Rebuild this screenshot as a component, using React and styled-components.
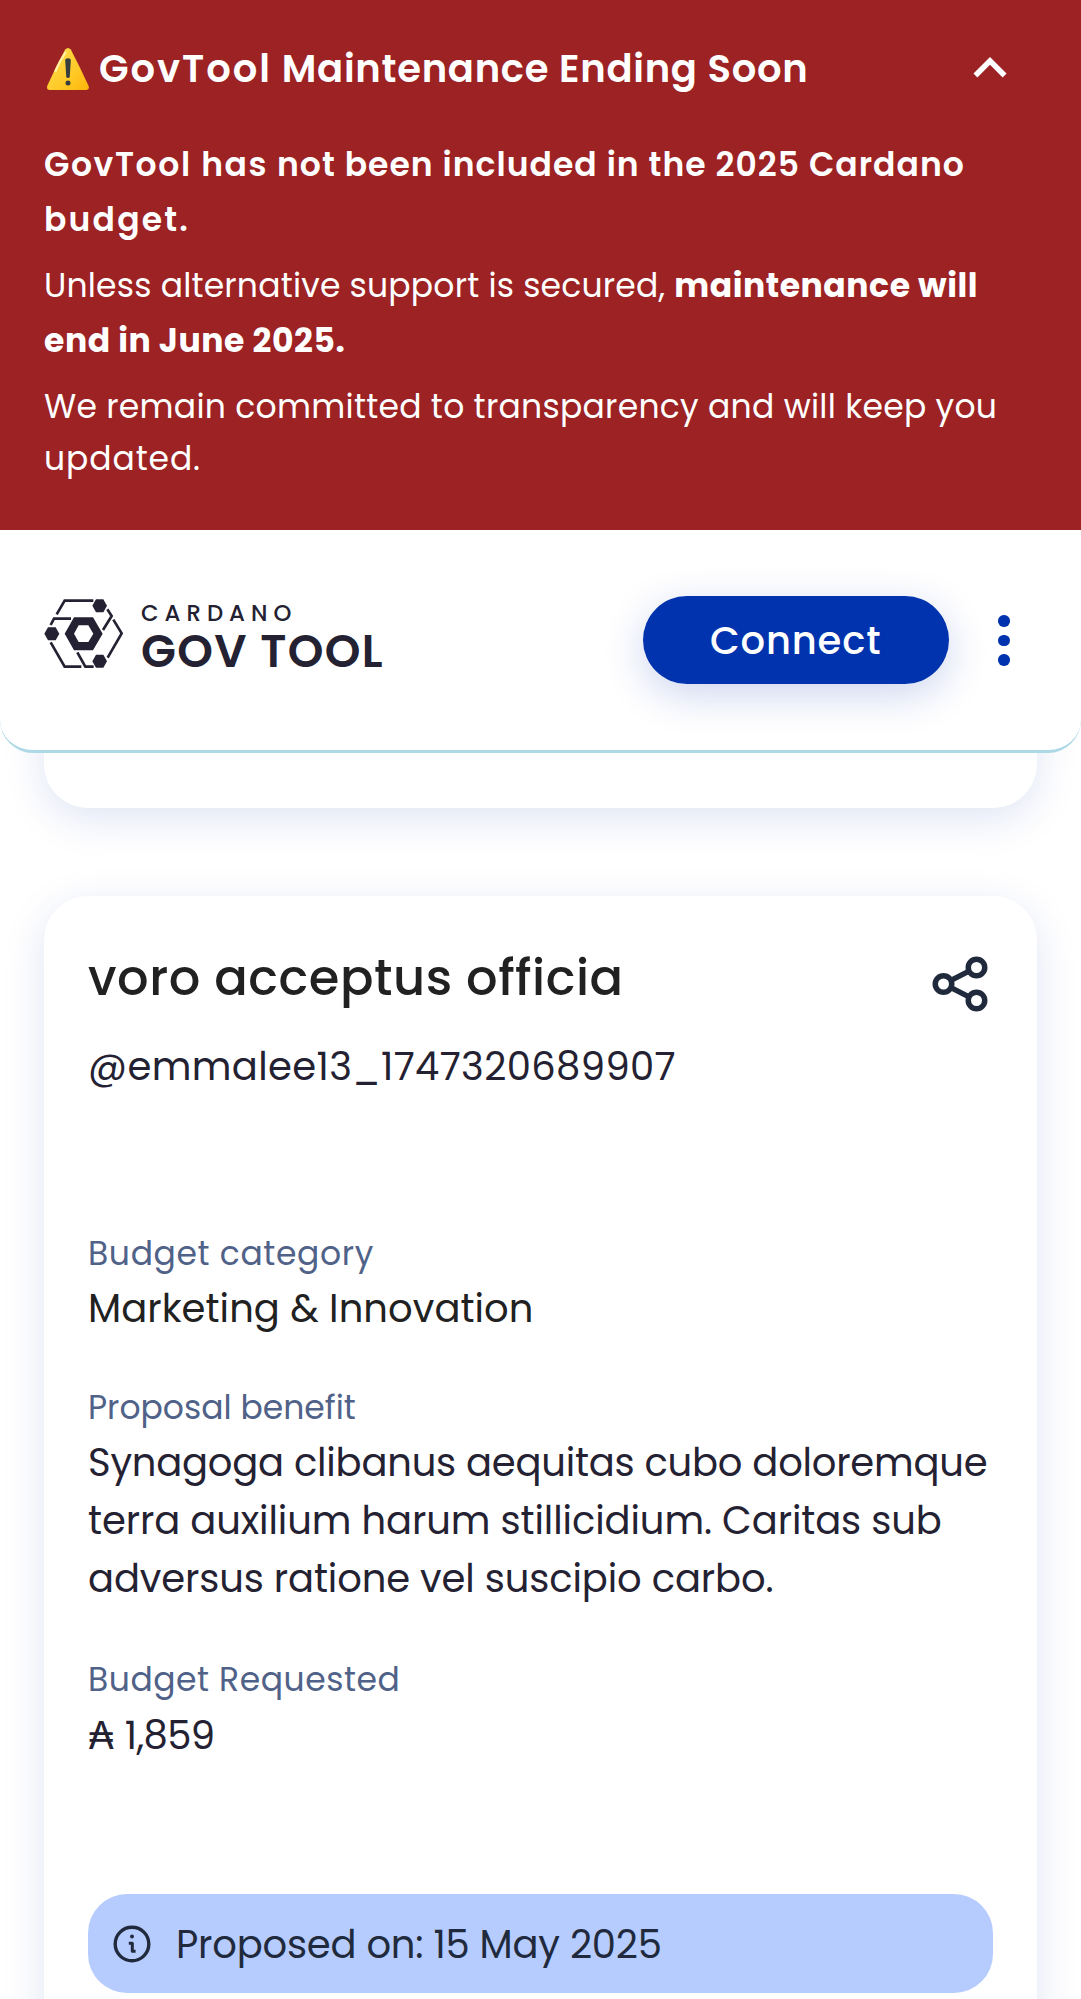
import React from "react";
import styled, { createGlobalStyle } from "styled-components";

const GlobalStyle = createGlobalStyle`
  *, *::before, *::after { box-sizing: border-box; }
  body {
    margin: 0;
    background: #fff;
    font-family: Poppins, Inter, "Open Sans", sans-serif;
  }
  p, h1, h2 { margin: 0; font-weight: 400; }
`;

const Page = styled.div`
  width: 100%;
  height: 1999px;
  overflow: hidden;
  display: flex;
  flex-direction: column;
`;

const Banner = styled.section`
  flex: none;
  height: 530px;
  padding: 35px 44px 0;
  background: #9c2224;
  color: #fff;
`;

const BannerHead = styled.div`
  display: flex;
  align-items: center;
  height: 66px;
  padding-right: 14px;
  margin-bottom: 36px;
`;

const BannerTitle = styled.h1`
  flex: 1;
  margin-left: 10px;
  padding-top: 2px;
  font-size: 38.5px;
  line-height: 66px;
  font-weight: 600;
  white-space: nowrap;
`;

const BannerText = styled.p`
  margin-bottom: ${(p) => p.$gap || 0}px;
  font-size: 33px;
  line-height: ${(p) => p.$leading || 55}px;
  font-weight: ${(p) => (p.$strong ? 600 : 400)};
`;

const Line = styled.span`
  display: block;
  white-space: nowrap;
  letter-spacing: ${(p) => p.$track || 0}px;
`;

const Run = styled.span`
  letter-spacing: ${(p) => p.$track || 0}px;
  font-weight: ${(p) => p.$weight || "inherit"};
`;

const Header = styled.header`
  position: relative;
  z-index: 2;
  flex: none;
  display: flex;
  align-items: center;
  height: 223px;
  padding: 0 44px;
  background: #fff;
  border-bottom: 3px solid #add8e6;
  border-radius: 0 0 33px 33px;
`;

const Brand = styled.div`
  flex: 1;
  display: flex;
  align-items: center;
  gap: 18.5px;
  margin: -13px 0 0 -0.5px;
`;

const BrandText = styled.div`
  display: flex;
  flex-direction: column;
  margin-top: 8px;
  color: #242232;
  white-space: nowrap;
`;

const BrandTop = styled.span`
  font-size: 22.8px;
  line-height: 27px;
  font-weight: 500;
  letter-spacing: 6px;
`;

const BrandName = styled.span`
  font-size: 45.4px;
  line-height: 49px;
  font-weight: 600;
  letter-spacing: 1.4px;
`;

const ConnectButton = styled.button`
  width: 306px;
  height: 88px;
  padding: 0;
  border: 0;
  border-radius: 44px;
  background: #0033ad;
  color: #fff;
  font: inherit;
  font-size: 38.5px;
  font-weight: 500;
  letter-spacing: 0.85px;
  box-shadow: 0 11px 41px rgba(0, 51, 173, 0.2);
`;

const MenuButton = styled.div`
  display: flex;
  flex-direction: column;
  align-items: center;
  gap: 8px;
  margin: 1px 27.5px 0 49.5px;
`;

const Dot = styled.span`
  width: 11.4px;
  height: 11.4px;
  border-radius: 50%;
  background: #0033ad;
`;

const Card = styled.article`
  flex: none;
  margin: 0 44px;
  padding: 49px 44px 0;
  background: #fff;
  border-radius: 44px;
  box-shadow: 0 11px 41px rgba(0, 51, 173, 0.13);
`;

const PreviousCard = styled(Card)`
  height: 155px;
  margin-top: -100px;
  margin-bottom: 88px;
`;

const ProposalCard = styled(Card)`
  height: 1300px;
`;

const CardHead = styled.div`
  display: flex;
  justify-content: space-between;
  height: 73px;
  margin-bottom: 20px;
`;

const CardTitle = styled.h2`
  font-size: 49.5px;
  line-height: 66px;
  font-weight: 500;
  color: #212121;
`;

const Value = styled.p`
  font-size: 38.5px;
  line-height: 58px;
  color: ${(p) => p.$color || "#242232"};
`;

const Field = styled.div`
  margin-bottom: ${(p) => p.$gap}px;
`;

const Label = styled.p`
  margin-bottom: ${(p) => p.$gap || 4}px;
  font-size: 33px;
  line-height: 44px;
  color: #506288;
`;

const Handle = styled(Value)`
  margin-bottom: 136px;
`;

const DateBadge = styled.div`
  display: flex;
  align-items: center;
  gap: 22px;
  height: 99px;
  padding-left: 22px;
  border-radius: 39px;
  background: #b6ccff;
`;

const DateText = styled(Value)`
  padding-top: 2px;
`;

const Icon = styled.svg`
  flex: none;
  display: block;
  margin-top: ${(p) => p.$top || 0}px;
`;

const WarningIcon = () => (
  <Icon width="45" height="44" viewBox="0 0 45 44" $top={2}>
    <defs>
      <linearGradient id="warn" x1="0" y1="0" x2="1" y2="1">
        <stop offset="0" stopColor="#ffdf55" />
        <stop offset="0.6" stopColor="#ffca28" />
        <stop offset="1" stopColor="#fdb50a" />
      </linearGradient>
    </defs>
    <path d="M21.2 2.4Q24 -0.6 26.8 2.4Q36 20 44.4 38.5Q46 42.8 42.5 43H5.2Q2 42.6 3.4 38.5Q11.5 20 21.2 2.4Z" fill="url(#warn)" />
    <path d="M21.5 5.5Q15 15 11.5 24" stroke="#fff2a8" strokeWidth="2.2" strokeLinecap="round" fill="none" />
    <path d="M21.2 13.5Q21.2 11.3 24 11.3Q26.8 11.3 26.8 13.5L25.8 29.5Q25.6 31 24 31Q22.4 31 22.2 29.5Z" fill="#373d3f" />
    <circle cx="24" cy="36" r="2.5" fill="#373d3f" />
  </Icon>
);

const CollapseIcon = () => (
  <Icon width="66" height="66" viewBox="0 0 24 24" fill="#fff">
    <path d="m12 8-6 6 1.41 1.41L12 10.83l4.59 4.58L18 14z" />
  </Icon>
);

const LogoMark = () => (
  <Icon width="79" height="70" viewBox="131 116 237 210">
    <g fill="none" stroke="#242232" strokeWidth="8">
      <path d="M279 121H193L169 162" />
      <path d="M321 147L334 167L308 209" />
      <path d="M339 178L364 219L322 292" />
      <path d="M212 175H161L151 194" />
      <path d="M151 246L193 319H243" />
      <path d="M231 276L255 319H280" />
    </g>
    <g fill="#242232">
      <path d="M276 136L287 117H309L320 136L309 156H287Z" />
      <path d="M132 220L143 201H166L177 220L166 240H143Z" />
      <path d="M276 303L287 283H309L320 303L309 322H287Z" />
      <path
        fillRule="evenodd"
        d="M193 220L221 171H278L307 220L278 270H221ZM221 220L235 245H264L279 220L264 195H235Z"
      />
    </g>
  </Icon>
);

const ShareIcon = () => (
  <Icon width="66" height="66" viewBox="0 0 24 24" fill="none" stroke="#212a3d" strokeWidth="2" $top={6}>
    <circle cx="18" cy="6" r="3" />
    <circle cx="6" cy="12" r="3" />
    <circle cx="18" cy="18" r="3" />
    <path d="M8.7 10.7L15.3 7.3M8.7 13.3L15.3 16.7" />
  </Icon>
);

const InfoIcon = () => (
  <Icon width="44" height="44" viewBox="0 0 44 44" fill="none" stroke="#212a3d">
    <circle cx="22" cy="22" r="16.8" strokeWidth="3.4" />
    <circle cx="22" cy="14.5" r="2" fill="#212a3d" stroke="none" />
    <path d="M18.8 21.2H22.3V29.2H25.6" strokeWidth="3" strokeLinejoin="round" />
  </Icon>
);

export default function App() {
  return (
    <>
      <GlobalStyle />
      <Page>
        <Banner>
          <BannerHead>
            <WarningIcon />
            <BannerTitle>
              <Line>
                <Run $track={1.95}>GovTool</Run>
                <Run $track={0.72}> Maintenance Ending Soon</Run>
              </Line>
            </BannerTitle>
            <CollapseIcon />
          </BannerHead>
          <BannerText $strong $gap={11}>
            <Line>
              <Run $track={1.6}>GovTool has</Run>
              <Run $track={1.03}> not been included in the 2025 Cardano</Run>
            </Line>
            <Line $track={2.2}>budget.</Line>
          </BannerText>
          <BannerText $gap={13}>
            <Line>
              <Run $track={0.2}>Unless alternative support is secured, </Run>
              <Run $weight={700} $track={0.55}>maintenance will</Run>
            </Line>
            <Line>
              <Run $weight={700} $track={0.56}>end in June 2025.</Run>
            </Line>
          </BannerText>
          <BannerText $leading={52}>
            <Line $track={0.27}>We remain committed to transparency and will keep you</Line>
            <Line $track={0.9}>updated.</Line>
          </BannerText>
        </Banner>
        <Header>
          <Brand>
            <LogoMark />
            <BrandText>
              <BrandTop>CARDANO</BrandTop>
              <BrandName>GOV TOOL</BrandName>
            </BrandText>
          </Brand>
          <ConnectButton>Connect</ConnectButton>
          <MenuButton>
            <Dot />
            <Dot />
            <Dot />
          </MenuButton>
        </Header>
        <PreviousCard />
        <ProposalCard>
          <CardHead>
            <CardTitle>
              <Line $track={0.54}>voro acceptus officia</Line>
            </CardTitle>
            <ShareIcon />
          </CardHead>
          <Handle>
            <Line $track={0.39}>@emmalee13_1747320689907</Line>
          </Handle>
          <Field $gap={48}>
            <Label>
              <Line $track={0.64}>Budget category</Line>
            </Label>
            <Value $color="#212121">
              <Line $track={0.06}>Marketing &amp; Innovation</Line>
            </Value>
          </Field>
          <Field $gap={50}>
            <Label>
              <Line>Proposal benefit</Line>
            </Label>
            <Value>
              <Line $track={-0.22}>Synagoga clibanus aequitas cubo doloremque</Line>
              <Line $track={-0.1}>terra auxilium harum stillicidium. Caritas sub</Line>
              <Line $track={-0.13}>adversus ratione vel suscipio carbo.</Line>
            </Value>
          </Field>
          <Field $gap={129}>
            <Label $gap={5}>
              <Line $track={0.54}>Budget Requested</Line>
            </Label>
            <Value>
              <Line>
                <Run>₳ </Run>
                <Run $track={-0.6}>1,859</Run>
              </Line>
            </Value>
          </Field>
          <DateBadge>
            <InfoIcon />
            <DateText $color="#212a3d">
              <Line $track={-0.2}>Proposed on: 15 May 2025</Line>
            </DateText>
          </DateBadge>
        </ProposalCard>
      </Page>
    </>
  );
}
